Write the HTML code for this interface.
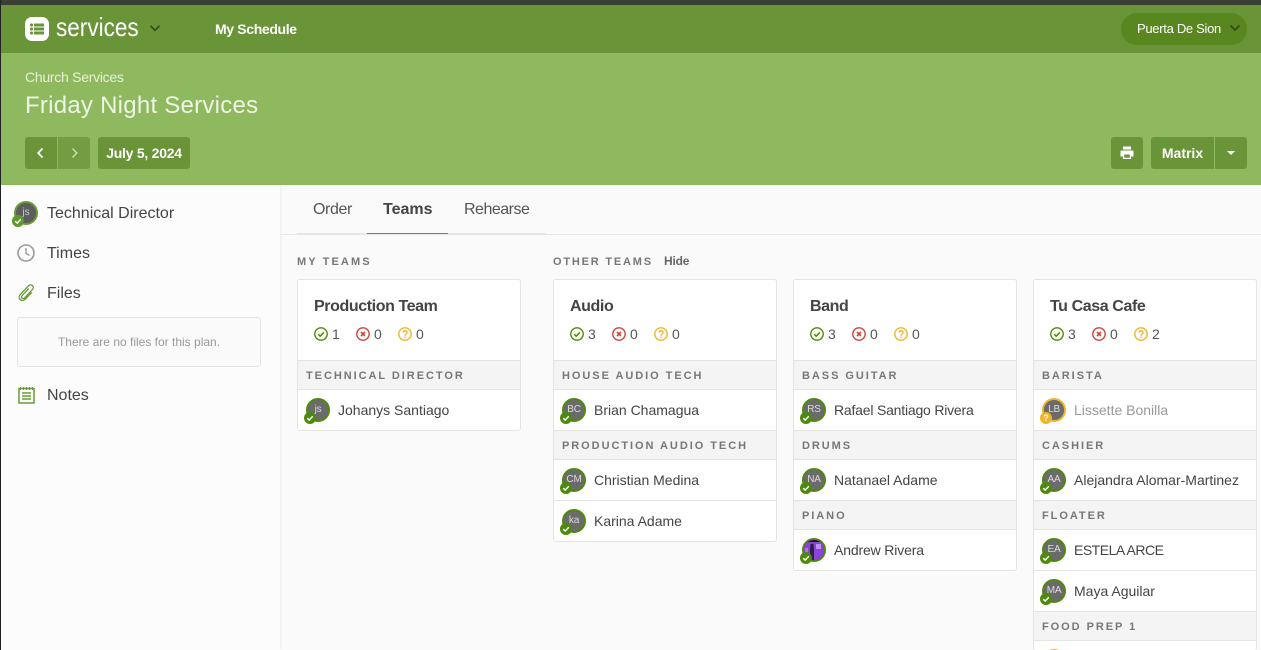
<!DOCTYPE html>
<html><head><meta charset="utf-8"><style>
*{box-sizing:border-box}
html,body{margin:0;padding:0;width:1261px;height:650px;overflow:hidden;background:#fafafa;font-family:"Liberation Sans",sans-serif;color:#444}
#w{position:relative;width:1261px;height:650px;overflow:hidden;background:#fafafa}
.a{position:absolute;white-space:nowrap}
.card{position:absolute;top:279px;width:224px;background:#fff;border:1px solid #e4e4e4;border-radius:3px;overflow:hidden}
.hd{height:81px;border-bottom:1px solid #e4e4e4;position:relative}
.hd b{position:absolute;left:16px;top:17px;font-size:16px;line-height:19px;color:#444;letter-spacing:-.4px}
.st{position:absolute;top:46px;font-size:14px;color:#555;line-height:16px}
.st svg{position:absolute;left:-18px;top:1px}
.role{height:29px;background:#f4f4f4;border-bottom:1px solid #e4e4e4;font-size:11px;font-weight:bold;color:#777;letter-spacing:1.95px;padding:8px 0 0 8px;line-height:14px;white-space:nowrap}
.p{height:41px;border-bottom:1px solid #e4e4e4;position:relative;font-size:14px;line-height:40px;padding-left:40px;white-space:nowrap;color:#444}
.p:last-child{border-bottom:0;height:40px}
.av{position:absolute;left:8px;top:8px;width:24px;height:24px;border-radius:50%;border:2px solid #4d8a0b;background:#6b6b6b;color:#ddd;font-size:10px;line-height:20px;text-align:center;padding:0;letter-spacing:-.2px}
.bd{position:absolute;left:6px;top:22px;width:12px;height:12px;border-radius:50%;background:#4d8a0b}
.bd svg{position:absolute;left:2px;top:2px}
.y .av{border-color:#f0b429}.y .bd{background:#f0b429;color:#fff;font-size:9px;line-height:12px;text-align:center;font-weight:bold}
.y{color:#999}
.btn{position:absolute;top:137px;height:32px;background:#6a9438;border-radius:3px;color:#fff;font-size:14px;font-weight:bold;line-height:32px;text-align:center}
</style></head><body><div id="w">
<svg width="0" height="0" style="position:absolute"><defs>
<symbol id="ok" viewBox="0 0 14 14"><circle cx="7" cy="7" r="6.2" fill="none" stroke="#4d8a0b" stroke-width="1.4"/><path d="M4.2 7.2l2 2 3.7-3.9" fill="none" stroke="#4d8a0b" stroke-width="1.5"/></symbol>
<symbol id="no" viewBox="0 0 14 14"><circle cx="7" cy="7" r="6.2" fill="none" stroke="#c9453a" stroke-width="1.4"/><path d="M5 5l4 4M9 5l-4 4" fill="none" stroke="#c9453a" stroke-width="1.6"/></symbol>
<symbol id="q" viewBox="0 0 14 14"><circle cx="7" cy="7" r="6.2" fill="none" stroke="#f0b429" stroke-width="1.4"/><path d="M5.1 5.6c0-2.5 3.9-2.4 3.9-.1 0 1.500-2 1.500-2 3.200" fill="none" stroke="#f0b429" stroke-width="1.4"/><rect x="6.300" y="9.600" width="1.400" height="1.500" fill="#f0b429"/></symbol>
<symbol id="ck" viewBox="0 0 8 8"><path d="M1.200 4.200l2 1.900 3.600-3.900" fill="none" stroke="#fff" stroke-width="1.500"/></symbol>
</defs></svg>

<!-- top -->
<div class="a" style="left:0;top:0;width:1261px;height:5px;background:#383e31"></div>
<div class="a" style="left:1px;top:5px;width:1260px;height:48px;background:#6a9438"></div>
<div class="a" style="left:0;top:0;width:1px;height:650px;background:#222"></div>
<div class="a" style="left:25px;top:17px;width:24px;height:24px;background:#fff;border-radius:7px"></div>
<svg class="a" style="left:25px;top:17px" width="24" height="24"><g fill="#6a9438"><rect x="5" y="6.500" width="3" height="3" rx="1"/><rect x="5" y="10.500" width="3" height="3" rx="1"/><rect x="5" y="14.500" width="3" height="3" rx="1"/><rect x="9" y="6.500" width="10" height="3"/><rect x="9" y="10.500" width="10" height="3"/><rect x="9" y="14.500" width="10" height="3"/></g></svg>
<div class="a" style="left:56px;top:12px;font-size:26px;line-height:30px;color:#fff;transform:scaleX(.867);transform-origin:left center">services</div>
<svg class="a" style="left:149px;top:24px" width="12" height="9"><path d="M1.500 1.800l4.500 4.500 4.500-4.500" fill="none" stroke="#2f4a14" stroke-width="1.600"/></svg>
<div class="a" style="left:215px;top:21px;font-size:14px;line-height:17px;font-weight:bold;color:#fff;letter-spacing:-.35px">My Schedule</div>
<div class="a" style="left:1121px;top:13px;width:126px;height:32px;border-radius:16px;background:#58871f"></div>
<div class="a" style="left:1137px;top:21px;font-size:13px;line-height:16px;color:#fff;letter-spacing:-.3px">Puerta De Sion</div>
<svg class="a" style="left:1229px;top:24px" width="12" height="9"><path d="M1.500 1.500l4.500 4.500 4.500-4.500" fill="none" stroke="#2f4a14" stroke-width="1.600"/></svg>

<!-- header -->
<div class="a" style="left:1px;top:53px;width:1260px;height:132px;background:#8fb95f"></div>
<div class="a" style="left:25px;top:69px;font-size:14px;line-height:17px;color:#e6f0da;letter-spacing:-.27px">Church Services</div>
<div class="a" style="left:25px;top:91px;font-size:24px;line-height:30px;color:#eef4e6;letter-spacing:.25px">Friday Night Services</div>
<div class="btn" style="left:25px;width:32px;border-radius:3px 0 0 3px"></div>
<div class="btn" style="left:58px;width:32px;border-radius:0 3px 3px 0;background:#739d42"></div>
<svg class="a" style="left:36px;top:147px" width="9" height="12"><path d="M6.500 1.500L2.200 6l4.300 4.500" fill="none" stroke="#fff" stroke-width="1.800"/></svg>
<svg class="a" style="left:70px;top:147px" width="9" height="12"><path d="M2.500 1.500L6.800 6l-4.300 4.500" fill="none" stroke="#c8dcb0" stroke-width="1.500"/></svg>
<div class="btn" style="left:98px;width:92px;letter-spacing:-.25px">July 5, 2024</div>
<div class="btn" style="left:1111px;width:32px"></div>
<svg class="a" style="left:1120px;top:146px" width="14" height="14"><path fill="#fff" d="M3 0.500h8v3H3zM1.500 4.500h11a1 1 0 0 1 1 1V10.500H11V13H3v-2.500H.5V5.500a1 1 0 0 1 1-1zM4.200 8.500V11.800h5.600V8.500z"/></svg>
<div class="btn" style="left:1151px;width:63px;border-radius:3px 0 0 3px">Matrix</div>
<div class="btn" style="left:1215px;width:32px;border-radius:0 3px 3px 0"></div>
<div class="a" style="left:1227px;top:151px;width:0;height:0;border-left:4px solid transparent;border-right:4px solid transparent;border-top:4px solid #fff"></div>

<!-- sidebar -->
<div class="a" style="left:1px;top:185px;width:279px;height:465px;background:#fcfcfc;box-shadow:1px 0 3px rgba(0,0,0,.06)"></div>
<div class="a" style="left:14px;top:201px;width:24px;height:24px;border-radius:50%;border:2px solid #6a9b3a;background:#5d5d5d;color:#ccc;font-size:10px;line-height:20px;text-align:center">js</div>
<div class="a" style="left:12px;top:215px;width:12px;height:12px;border-radius:50%;background:#5c9a2c"><svg class="a" style="left:2px;top:2px" width="8" height="8"><use href="#ck"/></svg></div>
<div class="a" style="left:47px;top:204px;font-size:16px;line-height:19px;color:#444">Technical Director</div>
<svg class="a" style="left:17px;top:244px" width="18" height="18"><circle cx="9" cy="9" r="8" fill="none" stroke="#9a9a9a" stroke-width="1.600"/><path d="M9 4v5.300l3.600 2.200" fill="none" stroke="#9a9a9a" stroke-width="1.400"/></svg>
<div class="a" style="left:47px;top:244px;font-size:16px;line-height:19px;color:#444">Times</div>
<svg class="a" style="left:17px;top:283px" width="18" height="19"><path d="M11.800 5.500L5 12.700c-1.600 1.800.9 4 2.500 2.300l8-8.600c2.500-2.800-1.500-6.400-4-3.600L3.200 11.500c-3.300 3.700 1.800 8.300 5.100 4.700l6.400-6.900" fill="none" stroke="#6a9b3a" stroke-width="1.300"/></svg>
<div class="a" style="left:47px;top:284px;font-size:16px;line-height:19px;color:#444">Files</div>
<div class="a" style="left:17px;top:317px;width:244px;height:50px;background:#fafafa;border:1px solid #e4e4e4;border-radius:3px;font-size:12px;line-height:48px;text-align:center;color:#999">There are no files for this plan.</div>
<svg class="a" style="left:18px;top:386px" width="17" height="18"><rect x="1" y="2.500" width="15" height="14.500" fill="none" stroke="#6a9b3a" stroke-width="1.500"/><path d="M2.500 1v3M5.500 1v3M8.500 1v3M11.500 1v3M14.500 1v3" stroke="#6a9b3a" stroke-width="1.200"/><path d="M4 7h9M4 10h9M4 13h9" stroke="#6a9b3a" stroke-width="1.500"/></svg>
<div class="a" style="left:47px;top:386px;font-size:16px;line-height:19px;color:#444">Notes</div>

<!-- tabs -->
<div class="a" style="left:281px;top:234px;width:980px;height:1px;background:#e8e8e8"></div>
<div class="a" style="left:297px;top:233px;width:249px;height:2px;background:#e6e6e6"></div>
<div class="a" style="left:367px;top:233px;width:81px;height:1px;background:#5c9a2c"></div>
<div class="a" style="left:313px;top:200px;font-size:16px;line-height:19px;color:#555;letter-spacing:-.4px">Order</div>
<div class="a" style="left:383px;top:200px;font-size:16px;line-height:19px;font-weight:bold;color:#444">Teams</div>
<div class="a" style="left:464px;top:200px;font-size:16px;line-height:19px;color:#555;letter-spacing:-.5px">Rehearse</div>

<div class="a" style="left:297px;top:255px;font-size:11px;line-height:14px;font-weight:bold;color:#777;letter-spacing:2.1px">MY TEAMS</div>
<div class="a" style="left:553px;top:255px;font-size:11px;line-height:14px;font-weight:bold;color:#777;letter-spacing:1.8px">OTHER TEAMS</div>
<div class="a" style="left:664px;top:254px;font-size:12px;line-height:14px;font-weight:bold;color:#666;letter-spacing:-.2px">Hide</div>

<!-- cards -->
<div class="card" style="left:297px">
<div class="hd"><b>Production Team</b>
<span class="st" style="left:34px"><svg width="14" height="14"><use href="#ok"/></svg>1</span><span class="st" style="left:76px"><svg width="14" height="14"><use href="#no"/></svg>0</span><span class="st" style="left:118px"><svg width="14" height="14"><use href="#q"/></svg>0</span></div>
<div class="role">TECHNICAL DIRECTOR</div>
<div class="p"><span class="av">js</span><span class="bd" style="left:6px"><svg width="8" height="8"><use href="#ck"/></svg></span>Johanys Santiago</div>
</div>

<div class="card" style="left:553px">
<div class="hd"><b>Audio</b>
<span class="st" style="left:34px"><svg width="14" height="14"><use href="#ok"/></svg>3</span><span class="st" style="left:76px"><svg width="14" height="14"><use href="#no"/></svg>0</span><span class="st" style="left:118px"><svg width="14" height="14"><use href="#q"/></svg>0</span></div>
<div class="role">HOUSE AUDIO TECH</div>
<div class="p"><span class="av">BC</span><span class="bd"><svg width="8" height="8"><use href="#ck"/></svg></span>Brian Chamagua</div>
<div class="role">PRODUCTION AUDIO TECH</div>
<div class="p"><span class="av">CM</span><span class="bd"><svg width="8" height="8"><use href="#ck"/></svg></span>Christian Medina</div>
<div class="p"><span class="av">ka</span><span class="bd"><svg width="8" height="8"><use href="#ck"/></svg></span>Karina Adame</div>
</div>

<div class="card" style="left:793px">
<div class="hd"><b>Band</b>
<span class="st" style="left:34px"><svg width="14" height="14"><use href="#ok"/></svg>3</span><span class="st" style="left:76px"><svg width="14" height="14"><use href="#no"/></svg>0</span><span class="st" style="left:118px"><svg width="14" height="14"><use href="#q"/></svg>0</span></div>
<div class="role">BASS GUITAR</div>
<div class="p" style="letter-spacing:-.2px"><span class="av">RS</span><span class="bd"><svg width="8" height="8"><use href="#ck"/></svg></span>Rafael Santiago Rivera</div>
<div class="role">DRUMS</div>
<div class="p"><span class="av">NA</span><span class="bd"><svg width="8" height="8"><use href="#ck"/></svg></span>Natanael Adame</div>
<div class="role">PIANO</div>
<div class="p" style="letter-spacing:-.15px"><span class="av" style="background:#7a35c9;overflow:hidden"><svg width="20" height="20" style="display:block"><rect width="20" height="20" fill="#8a42d8"/><rect x="0" y="0" width="20" height="2" fill="#1b1030"/><rect x="6" y="7" width="4" height="13" fill="#2c2048"/><circle cx="8" cy="5.500" r="1.800" fill="#2a2038"/><rect x="12" y="4" width="5" height="5" fill="#c08cf0"/><rect x="1" y="8" width="3" height="6" fill="#b070ea"/></svg></span><span class="bd"><svg width="8" height="8"><use href="#ck"/></svg></span>Andrew Rivera</div>
</div>

<div class="card" style="left:1033px;height:372px;border-bottom:0">
<div class="hd"><b>Tu Casa Cafe</b>
<span class="st" style="left:34px"><svg width="14" height="14"><use href="#ok"/></svg>3</span><span class="st" style="left:76px"><svg width="14" height="14"><use href="#no"/></svg>0</span><span class="st" style="left:118px"><svg width="14" height="14"><use href="#q"/></svg>2</span></div>
<div class="role">BARISTA</div>
<div class="p y"><span class="av">LB</span><span class="bd">?</span>Lissette Bonilla</div>
<div class="role">CASHIER</div>
<div class="p"><span class="av">AA</span><span class="bd"><svg width="8" height="8"><use href="#ck"/></svg></span>Alejandra Alomar-Martinez</div>
<div class="role">FLOATER</div>
<div class="p" style="letter-spacing:-.5px"><span class="av">EA</span><span class="bd"><svg width="8" height="8"><use href="#ck"/></svg></span>ESTELA ARCE</div>
<div class="p"><span class="av">MA</span><span class="bd"><svg width="8" height="8"><use href="#ck"/></svg></span>Maya Aguilar</div>
<div class="role">FOOD PREP 1</div>
<div class="p y"><span class="av"></span></div>
</div>
</div></body></html>
